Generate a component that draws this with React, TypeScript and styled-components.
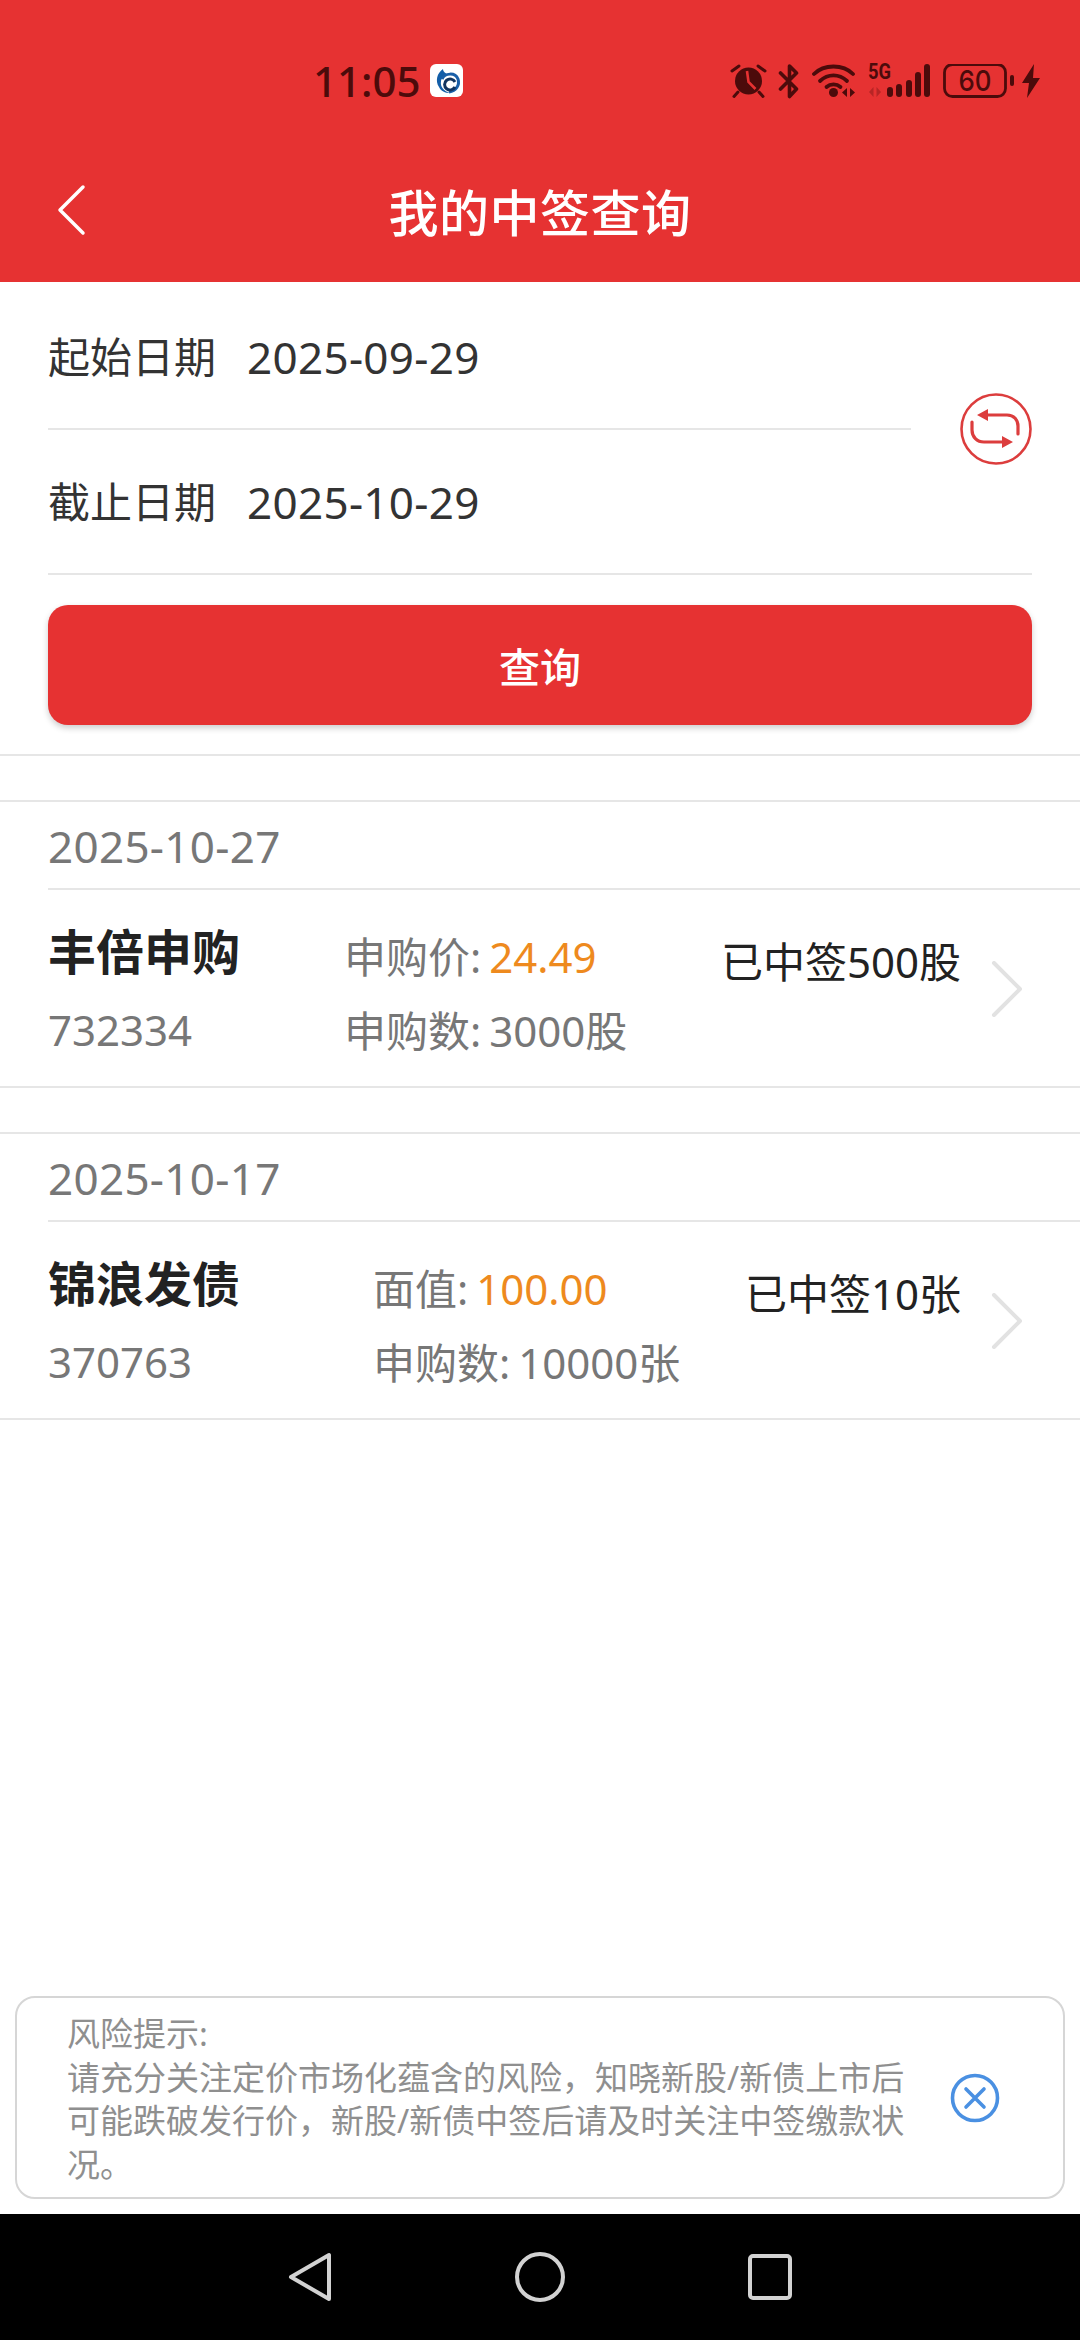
import React from "react";
import styled, { createGlobalStyle } from "styled-components";

const FONT = `"Noto Sans", "Noto Sans CJK SC", sans-serif`;

const GlobalStyle = createGlobalStyle`
  html, body {
    margin: 0;
    padding: 0;
    background: #fff;
    font-family: ${FONT};
  }
  * {
    box-sizing: border-box;
  }
`;

const Page = styled.div`
  width: 1080px;
  height: 2340px;
  display: flex;
  flex-direction: column;
  overflow: hidden;
  background: #fff;
`;

const Header = styled.header`
  height: 282px;
  flex: none;
  background: #e63232;
  display: flex;
  flex-direction: column;
`;

const StatusBar = styled.div`
  height: 129px;
  padding: 57px 40px 0 313px;
  display: flex;
  align-items: flex-start;
  color: #4c0b0b;
`;

const Clock = styled.div`
  font-size: 42px;
  line-height: 48px;
  font-weight: 500;
  width: 117px;
`;

const AppBadge = styled.div`
  width: 33px;
  height: 33px;
  margin-top: 7px;
`;

const StatusIcons = styled.div`
  margin-left: auto;
  display: flex;
  align-items: flex-end;
  height: 36px;
  margin-top: 7px;
  gap: 11px;
`;

const BatterySvg = styled.svg`
  margin-right: -3px;
`;

const TitleBar = styled.div`
  height: 153px;
  padding: 0 0 0 54px;
  display: flex;
  align-items: flex-start;
  position: relative;
`;

const BackButton = styled.div`
  width: 34px;
  height: 52px;
  margin-top: 55px;
`;

const Title = styled.h1`
  position: absolute;
  left: 0;
  right: 0;
  top: 50px;
  margin: 0;
  text-align: center;
  color: #fff;
  font-size: 50px;
  line-height: 68px;
  font-weight: 500;
  letter-spacing: 0.5px;
`;

const QueryForm = styled.section`
  padding: 3px 48px 0;
  border-bottom: 2px solid #e6e6e6;
  height: 474px;
  flex: none;
`;

const DateFields = styled.div`
  position: relative;
`;

const DateRow = styled.div<{ $short?: boolean }>`
  height: 145px;
  padding-top: 43px;
  margin-right: ${(p) => (p.$short ? "121px" : "0")};
  display: flex;
  gap: 31px;
  font-size: 42px;
  line-height: 58px;
  color: #333;
  border-bottom: 2px solid #e6e6e6;
`;

const DateValue = styled.span`
  font-size: 44px;
  letter-spacing: 0.3px;
`;

const SwapButton = styled.div`
  position: absolute;
  right: 0;
  top: 108px;
  width: 72px;
  height: 72px;
`;

const SubmitButton = styled.button`
  display: block;
  width: 100%;
  height: 120px;
  margin-top: 30px;
  border: 0;
  border-radius: 20px;
  background: #e63232;
  box-shadow: 0 3px 6px rgba(0, 0, 0, 0.2);
  color: #fff;
  font-family: ${FONT};
  font-size: 41px;
  font-weight: 500;
`;

const Groups = styled.main`
  flex: 1;
  padding-top: 44px;
  display: flex;
  flex-direction: column;
  gap: 44px;
`;

const Group = styled.section`
  border-top: 2px solid #e6e6e6;
  border-bottom: 2px solid #e6e6e6;
`;

const GroupDate = styled.div`
  height: 88px;
  margin-left: 48px;
  padding-top: 15px;
  font-size: 44px;
  line-height: 58px;
  letter-spacing: 0.3px;
  color: #777;
  border-bottom: 2px solid #e6e6e6;
`;

const Row = styled.div`
  height: 196px;
  padding: 0 57px 0 48px;
  display: flex;
  align-items: flex-start;
`;

const NameColumn = styled.div<{ $width: number }>`
  width: ${(p) => p.$width}px;
  flex: none;
  padding-top: 29px;
`;

const StockName = styled.div`
  font-size: 48px;
  line-height: 66px;
  font-weight: 700;
  color: #222;
`;

const Code = styled.div`
  margin-top: 17px;
  font-size: 42px;
  line-height: 56px;
  color: #777;
`;

const InfoColumn = styled.div`
  padding-top: 39px;
  display: flex;
  flex-direction: column;
  gap: 18px;
`;

const Info = styled.div`
  font-size: 42px;
  line-height: 56px;
  word-spacing: -3px;
  color: #777;
  white-space: nowrap;
`;

const Price = styled.span`
  color: #ee8a1e;
`;

const Result = styled.div`
  margin-left: auto;
  padding-top: 43px;
  font-size: 42px;
  line-height: 58px;
  color: #222;
  white-space: nowrap;
`;

const Chevron = styled.div`
  width: 32px;
  height: 56px;
  margin: 71px 0 0 30px;
  flex: none;
`;

const RiskCard = styled.aside`
  margin: 0 15px 15px;
  height: 203px;
  padding: 14px 0 0 50px;
  border: 2px solid #d6d6d6;
  border-radius: 20px;
  display: flex;
  align-items: center;
  flex: none;
`;

const RiskText = styled.div`
  width: 850px;
  align-self: flex-start;
  font-size: 33px;
  line-height: 43.5px;
  color: #8f8f8f;
  flex: none;
`;

const CloseButton = styled.div`
  width: 50px;
  height: 50px;
  margin-left: 33px;
  margin-top: -14px;
`;

const NavBar = styled.nav`
  height: 126px;
  flex: none;
  background: #000;
  display: flex;
  justify-content: center;
  align-items: center;
  gap: 183px;
`;

const AlarmIcon = () => (
  <svg width="37" height="36" viewBox="0 0 37 36">
    <circle cx="18.500" cy="17" r="13.500" fill="#4c0b0b" />
    <path d="M17 7l1.500 11 7 7" fill="none" stroke="#e63232" strokeWidth="2.600" />
    <path d="M2 7l7-5M35 7l-7-5M8 28l-4 4.500M29 28l4 4.500" stroke="#4c0b0b" strokeWidth="3" strokeLinecap="round" />
  </svg>
);

const BluetoothIcon = () => (
  <svg width="23" height="36" viewBox="0 0 23 36">
    <path
      d="M2.500 9l16 16-7 7.500V2l7 7-16 16"
      fill="none"
      stroke="#4c0b0b"
      strokeWidth="3.600"
      strokeLinecap="round"
      strokeLinejoin="round"
    />
  </svg>
);

const WifiIcon = () => (
  <svg width="45" height="36" viewBox="0 0 45 36">
    <g fill="none" stroke="#4c0b0b" strokeWidth="3.800" strokeLinecap="round">
      <path d="M2 10C12 0 31 0 41 10" />
      <path d="M8 17c8-7.500 19-7.500 27 0" />
      <path d="M14.500 23c4-3.500 10-3.500 14 0" />
    </g>
    <circle cx="21.500" cy="28.500" r="4.500" fill="#4c0b0b" />
    <path d="M35 24v9l-5-4.500zM38 24v9l5-4.500z" fill="#4c0b0b" />
  </svg>
);

const SignalIcon = () => (
  <svg width="64" height="44" viewBox="0 -8 64 44">
    <text x="0" y="15" fontFamily="Roboto, sans-serif" fontWeight="700" fontSize="22" textLength="23" lengthAdjust="spacingAndGlyphs" fill="#4c0b0b">
      5G
    </text>
    <path d="M5.500 23v10l-4.500-5zM8.500 23v10l4.500-5z" fill="#4c0b0b" opacity="0.3" />
    <g fill="#4c0b0b">
      <rect x="19" y="23" width="6" height="10" rx="3" />
      <rect x="28" y="20" width="6" height="13" rx="3" />
      <rect x="38" y="16" width="6" height="17" rx="3" />
      <rect x="47" y="8" width="6" height="25" rx="3" />
      <rect x="56" y="0" width="6" height="33" rx="3" />
    </g>
  </svg>
);

const BatteryIcon = () => (
  <BatterySvg width="71" height="36" viewBox="0 0 71 36">
    <rect x="1.500" y="0.500" width="61" height="32" rx="8" fill="none" stroke="#4c0b0b" strokeWidth="2.800" />
    <text x="15.500" y="27" textLength="33" lengthAdjust="spacingAndGlyphs" fontFamily="Inter, sans-serif" fontWeight="500" fontSize="29" fill="#4c0b0b">
      60
    </text>
    <rect x="67" y="11" width="4" height="11" rx="2" fill="#4c0b0b" />
  </BatterySvg>
);

const BoltIcon = () => (
  <svg width="18" height="36" viewBox="0 0 18 36">
    <path d="M12 0L0 19h7l-2 15L18 14h-7z" fill="#4c0b0b" />
  </svg>
);

const AppLogo = () => (
  <svg width="33" height="33" viewBox="0 0 33 33">
    <rect width="33" height="33" rx="6" fill="#fff" />
    <path d="M13 5C7 9 5 17 9 23c2 4 6 6 11 6-6-2-10-6-9-12 1-4 4-6 7-6-2-2-5-3-5-6z" fill="#135ea8" />
    <path d="M12 15c3-6 13-7 16 0 2 6-2 12-9 13" fill="none" stroke="#1a5fa8" strokeWidth="3" />
    <path d="M25 18a5.500 5.500 0 1 0 0 5" fill="none" stroke="#12345f" strokeWidth="3" />
  </svg>
);

const ChevronIcon = () => (
  <svg width="32" height="56" viewBox="0 0 32 56">
    <path d="M3 2l26 26L3 54" fill="none" stroke="#e2e2e2" strokeWidth="4" strokeLinecap="round" strokeLinejoin="round" />
  </svg>
);

const records = [
  {
    date: "2025-10-27",
    name: "丰倍申购",
    code: "732334",
    priceLabel: "申购价: ",
    price: "24.49",
    amount: "申购数: 3000股",
    result: "已中签500股",
    nameWidth: 296,
  },
  {
    date: "2025-10-17",
    name: "锦浪发债",
    code: "370763",
    priceLabel: "面值: ",
    price: "100.00",
    amount: "申购数: 10000张",
    result: "已中签10张",
    nameWidth: 325,
  },
];

export default function App() {
  return (
    <Page>
      <GlobalStyle />
      <Header>
        <StatusBar>
          <Clock>11:05</Clock>
          <AppBadge>
            <AppLogo />
          </AppBadge>
          <StatusIcons>
            <AlarmIcon />
            <BluetoothIcon />
            <WifiIcon />
            <SignalIcon />
            <BatteryIcon />
            <BoltIcon />
          </StatusIcons>
        </StatusBar>
        <TitleBar>
          <BackButton>
            <svg width="34" height="52" viewBox="0 0 34 52">
              <path d="M29 3L6 26l23 23" fill="none" stroke="#fff" strokeWidth="3.500" strokeLinecap="round" strokeLinejoin="round" />
            </svg>
          </BackButton>
          <Title>我的中签查询</Title>
        </TitleBar>
      </Header>

      <QueryForm>
        <DateFields>
          <DateRow $short>
            <span>起始日期</span>
            <DateValue>2025-09-29</DateValue>
          </DateRow>
          <DateRow>
            <span>截止日期</span>
            <DateValue>2025-10-29</DateValue>
          </DateRow>
          <SwapButton>
            <svg width="72" height="72" viewBox="0 0 72 72">
              <circle cx="36" cy="36" r="34.500" fill="none" stroke="#dc3d3d" strokeWidth="2.600" />
              <g fill="none" stroke="#dc3d3d" strokeWidth="3.200" strokeLinecap="round">
                <path d="M28 22h19c7 0 11 5 11 11v8" />
                <path d="M12 29v8c0 7 5 12 12 12h19" />
              </g>
              <path d="M17 22l11-6v12zM53 49l-11-6v12z" fill="#dc3d3d" />
            </svg>
          </SwapButton>
        </DateFields>
        <SubmitButton>查询</SubmitButton>
      </QueryForm>

      <Groups>
        {records.map((r) => (
          <Group key={r.code}>
            <GroupDate>{r.date}</GroupDate>
            <Row>
              <NameColumn $width={r.nameWidth}>
                <StockName>{r.name}</StockName>
                <Code>{r.code}</Code>
              </NameColumn>
              <InfoColumn>
                <Info>
                  {r.priceLabel}
                  <Price>{r.price}</Price>
                </Info>
                <Info>{r.amount}</Info>
              </InfoColumn>
              <Result>{r.result}</Result>
              <Chevron>
                <ChevronIcon />
              </Chevron>
            </Row>
          </Group>
        ))}
      </Groups>

      <RiskCard>
        <RiskText>
          风险提示:
          <br />
          请充分关注定价市场化蕴含的风险，知晓新股/新债上市后可能跌破发行价，新股/新债中签后请及时关注中签缴款状况。
        </RiskText>
        <CloseButton>
          <svg width="50" height="50" viewBox="0 0 50 50">
            <circle cx="25" cy="25" r="22.500" fill="none" stroke="#4a90e2" strokeWidth="3.600" />
            <path d="M16 16l18 18M34 16L16 34" stroke="#4a90e2" strokeWidth="3.600" strokeLinecap="round" />
          </svg>
        </CloseButton>
      </RiskCard>

      <NavBar>
        <svg width="44" height="50" viewBox="0 0 44 50">
          <path d="M41 3v44L3 25z" fill="none" stroke="#d2d2d2" strokeWidth="4" strokeLinejoin="round" />
        </svg>
        <svg width="50" height="50" viewBox="0 0 50 50">
          <circle cx="25" cy="25" r="23" fill="none" stroke="#d2d2d2" strokeWidth="4" />
        </svg>
        <svg width="44" height="46" viewBox="0 0 44 46">
          <rect x="2" y="2" width="40" height="42" rx="3" fill="none" stroke="#d2d2d2" strokeWidth="4" />
        </svg>
      </NavBar>
    </Page>
  );
}
